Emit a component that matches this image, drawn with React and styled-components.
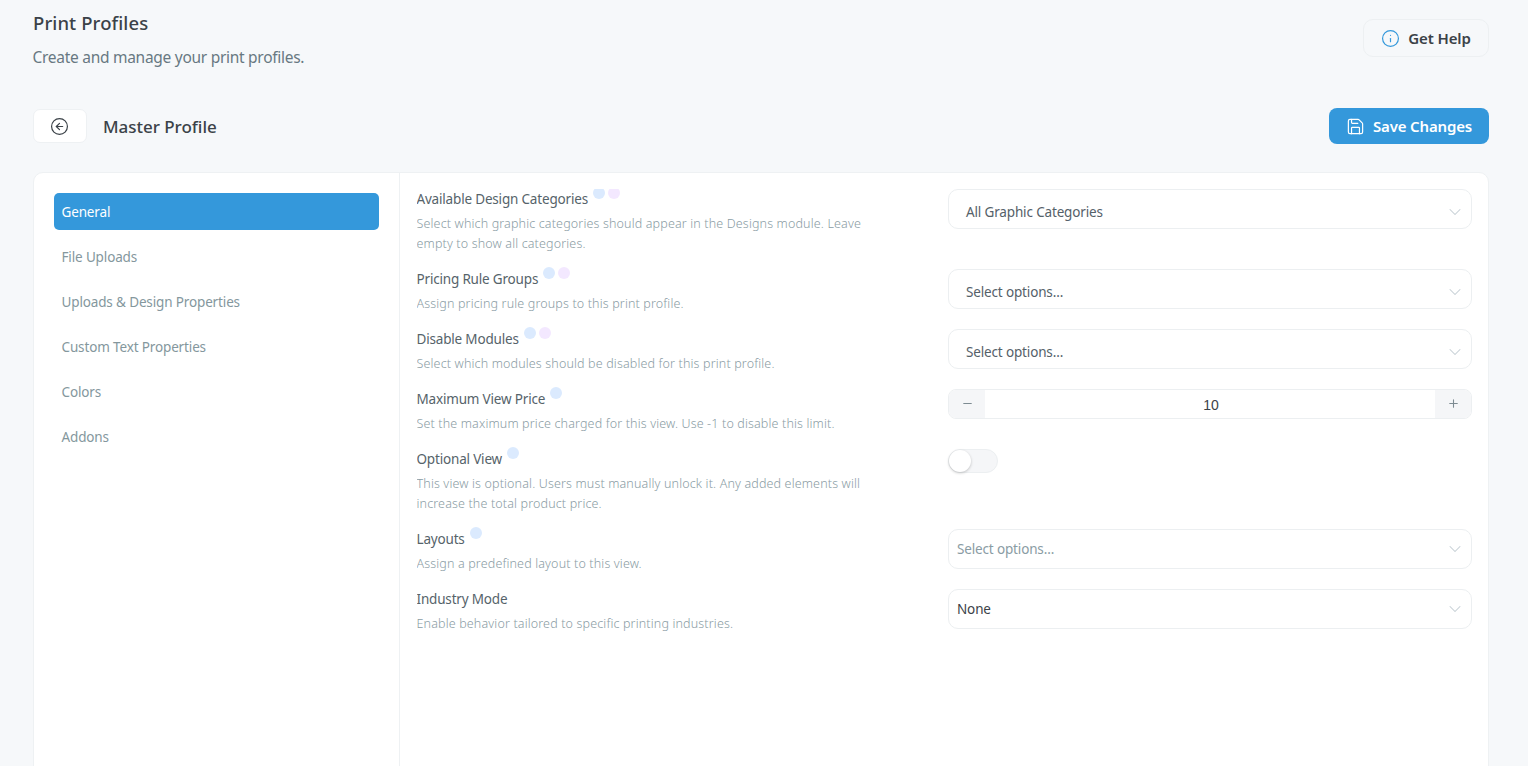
import React from "react";
import styled, { createGlobalStyle } from "styled-components";
import { CircleArrowLeft, Info, Save, ChevronDown, Minus, Plus } from "lucide-react";

const Global = createGlobalStyle`
  html, body { margin: 0; padding: 0; background: #f6f8fa; }
  body { font-family: "Noto Sans", "Open Sans", sans-serif; color: #3b4248; }
  * { box-sizing: border-box; }
`;

const Page = styled.div`
  height: 766px;
  overflow: hidden;
  padding: 11px 39px 0 33px;
`;
const TopBar = styled.header`
  display: flex;
  justify-content: space-between;
  align-items: flex-start;
  height: 97px;
`;
const PageTitle = styled.h1`
  margin: 0;
  font-size: 18.5px;
  line-height: 24px;
  font-weight: 500;
  letter-spacing: 0.1px;
  color: #3b4248;
`;
const PageSub = styled.p`
  margin: 10px 0 0 -0.5px;
  font-size: 15.5px;
  line-height: 24px;
  letter-spacing: -0.28px;
  color: #687882;
`;
const HelpButton = styled.button`
  display: flex;
  align-items: center;
  justify-content: center;
  gap: 8px;
  width: 126px;
  height: 38px;
  margin-top: 8px;
  border: 1px solid #edf0f2;
  border-radius: 10px;
  background: transparent;
  color: #3b4248;
  font: 600 15px "Noto Sans", sans-serif;
  letter-spacing: -0.1px;
  svg { color: #3498db; }
`;
const ProfileBar = styled.div`
  display: flex;
  align-items: center;
  justify-content: space-between;
  height: 36px;
`;
const ProfileLeft = styled.div`
  display: flex;
  align-items: center;
  gap: 16px;
`;
const BackButton = styled.button`
  display: flex;
  align-items: center;
  justify-content: center;
  width: 54px;
  height: 34px;
  border: 1px solid #eef1f3;
  border-radius: 7px;
  background: #fff;
  color: #3b4248;
  padding: 0 1px 0 0;
`;
const ProfileName = styled.h2`
  margin: 0;
  padding-top: 1px;
  font-size: 17px;
  line-height: 24px;
  font-weight: 500;
  letter-spacing: -0.03px;
  color: #3b4248;
`;
const SaveButton = styled.button`
  display: flex;
  align-items: center;
  justify-content: center;
  gap: 8px;
  width: 160px;
  height: 36px;
  border: 0;
  border-radius: 8px;
  background: #3498db;
  color: #fff;
  font: 600 15px "Noto Sans", sans-serif;
  letter-spacing: -0.16px;
`;
const Card = styled.main`
  display: flex;
  margin-top: 28px;
  height: 640px;
  background: #fff;
  border: 1px solid #eef1f3;
  border-radius: 10px;
`;
const Sidebar = styled.nav`
  width: 366px;
  flex: none;
  padding: 20px 20px 0;
  border-right: 1px solid #eef1f3;
  display: flex;
  flex-direction: column;
  gap: 8px;
`;
const NavItem = styled.div`
  height: 37px;
  display: flex;
  align-items: center;
  padding: 0 7.5px;
  border-radius: 5px;
  font-size: 13.5px;
  letter-spacing: -0.14px;
  color: ${(p) => (p.$active ? "#fff" : "#84979d")};
  background: ${(p) => (p.$active ? "#3498db" : "transparent")};
`;
const Content = styled.section`
  flex: 1;
  margin: 16px 16px 0 16.5px;
  overflow: hidden;
`;
const Row = styled.div`
  display: flex;
  justify-content: space-between;
  align-items: flex-start;
  padding-bottom: 15px;
`;
const FieldText = styled.div`
  width: 460px;
`;
const Label = styled.div`
  display: flex;
  font-size: 13.5px;
  line-height: 20px;
  letter-spacing: -0.18px;
  color: #56636a;
`;
const Dots = styled.span`
  display: inline-flex;
  align-items: flex-start;
  gap: 3px;
  margin-left: 5px;
  position: relative;
  top: -2px;
`;
const Dot = styled.i`
  width: 12px;
  height: 12px;
  border-radius: 50%;
  background: ${(p) => (p.$purple ? "#f3e8ff" : "#dbeafe")};
`;
const Desc = styled.p`
  margin: 5px 0 0;
  font-size: 12.5px;
  line-height: 20px;
  letter-spacing: 0.15px;
  font-weight: 300;
  color: #8a9ca4;
`;
const Select = styled.div`
  width: 524px;
  height: 40px;
  margin-bottom: 1px;
  display: flex;
  align-items: center;
  justify-content: space-between;
  padding: ${(p) => (p.$inset ? "6px 6px 0 17px" : "0 6px 0 8px")};
  border: 1px solid #eceff1;
  border-radius: 10px;
  background: #fff;
  font-size: 13.5px;
  letter-spacing: -0.15px;
  color: ${(p) => (p.$muted ? "#8a9ca4" : p.$inset ? "#556169" : "#3b4248")};
  svg { color: #c4ced4; flex: none; }
`;
const Stepper = styled.div`
  width: 524px;
  height: 30px;
  display: flex;
  align-items: stretch;
  border: 1px solid #eceff1;
  border-radius: 8px;
  overflow: hidden;
  background: #fff;
`;
const StepButton = styled.span`
  width: 36px;
  flex: none;
  display: flex;
  align-items: center;
  justify-content: center;
  padding-bottom: 1px;
  background: #f5f6f8;
  color: #7d8b92;
`;
const StepValue = styled.span`
  flex: 1;
  display: flex;
  align-items: center;
  justify-content: center;
  padding: 2px 0 0 2px;
  font: 14px "Liberation Sans", sans-serif;
  color: #3b4248;
`;
const SwitchSlot = styled.div`
  width: 524px;
`;
const Switch = styled.span`
  display: block;
  position: relative;
  width: 50px;
  height: 24px;
  border: 1px solid #eceff1;
  border-radius: 12px;
  background: #f5f6f8;
`;
const Knob = styled.span`
  position: absolute;
  left: 0;
  top: 0;
  width: 22px;
  height: 22px;
  border-radius: 50%;
  background: #fff;
  box-shadow: 0 1px 3px rgba(0, 0, 0, 0.22);
`;

const nav = ["General", "File Uploads", "Uploads & Design Properties", "Custom Text Properties", "Colors", "Addons"];

const Chevron = () => <ChevronDown size={20} strokeWidth={1.25} />;

const Field = ({ label, dots = 0, desc, children }) => (
  <Row>
    <FieldText>
      <Label>
        {label}
        {dots > 0 && (
          <Dots>
            <Dot />
            {dots > 1 && <Dot $purple />}
          </Dots>
        )}
      </Label>
      <Desc>{desc}</Desc>
    </FieldText>
    {children}
  </Row>
);

export default function App() {
  return (
    <Page>
      <Global />
      <TopBar>
        <div>
          <PageTitle>Print Profiles</PageTitle>
          <PageSub>Create and manage your print profiles.</PageSub>
        </div>
        <HelpButton>
          <Info size={19} strokeWidth={1.5} />
          Get Help
        </HelpButton>
      </TopBar>
      <ProfileBar>
        <ProfileLeft>
          <BackButton>
            <CircleArrowLeft size={19} strokeWidth={1.5} />
          </BackButton>
          <ProfileName>Master Profile</ProfileName>
        </ProfileLeft>
        <SaveButton>
          <Save size={19} strokeWidth={1.5} />
          Save Changes
        </SaveButton>
      </ProfileBar>
      <Card>
        <Sidebar>
          {nav.map((n, i) => (
            <NavItem key={n} $active={i === 0}>{n}</NavItem>
          ))}
        </Sidebar>
        <Content>
          <Field label="Available Design Categories" dots={2} desc="Select which graphic categories should appear in the Designs module. Leave empty to show all categories.">
            <Select $inset>All Graphic Categories<Chevron /></Select>
          </Field>
          <Field label="Pricing Rule Groups" dots={2} desc="Assign pricing rule groups to this print profile.">
            <Select $inset>Select options...<Chevron /></Select>
          </Field>
          <Field label="Disable Modules" dots={2} desc="Select which modules should be disabled for this print profile.">
            <Select $inset>Select options...<Chevron /></Select>
          </Field>
          <Field label="Maximum View Price" dots={1} desc="Set the maximum price charged for this view. Use -1 to disable this limit.">
            <Stepper>
              <StepButton><Minus size={13} strokeWidth={2} /></StepButton>
              <StepValue>10</StepValue>
              <StepButton><Plus size={13} strokeWidth={2} /></StepButton>
            </Stepper>
          </Field>
          <Field label="Optional View" dots={1} desc="This view is optional. Users must manually unlock it. Any added elements will increase the total product price.">
            <SwitchSlot>
              <Switch><Knob /></Switch>
            </SwitchSlot>
          </Field>
          <Field label="Layouts" dots={1} desc="Assign a predefined layout to this view.">
            <Select $muted>Select options...<Chevron /></Select>
          </Field>
          <Field label="Industry Mode" desc="Enable behavior tailored to specific printing industries.">
            <Select>None<Chevron /></Select>
          </Field>
        </Content>
      </Card>
    </Page>
  );
}
